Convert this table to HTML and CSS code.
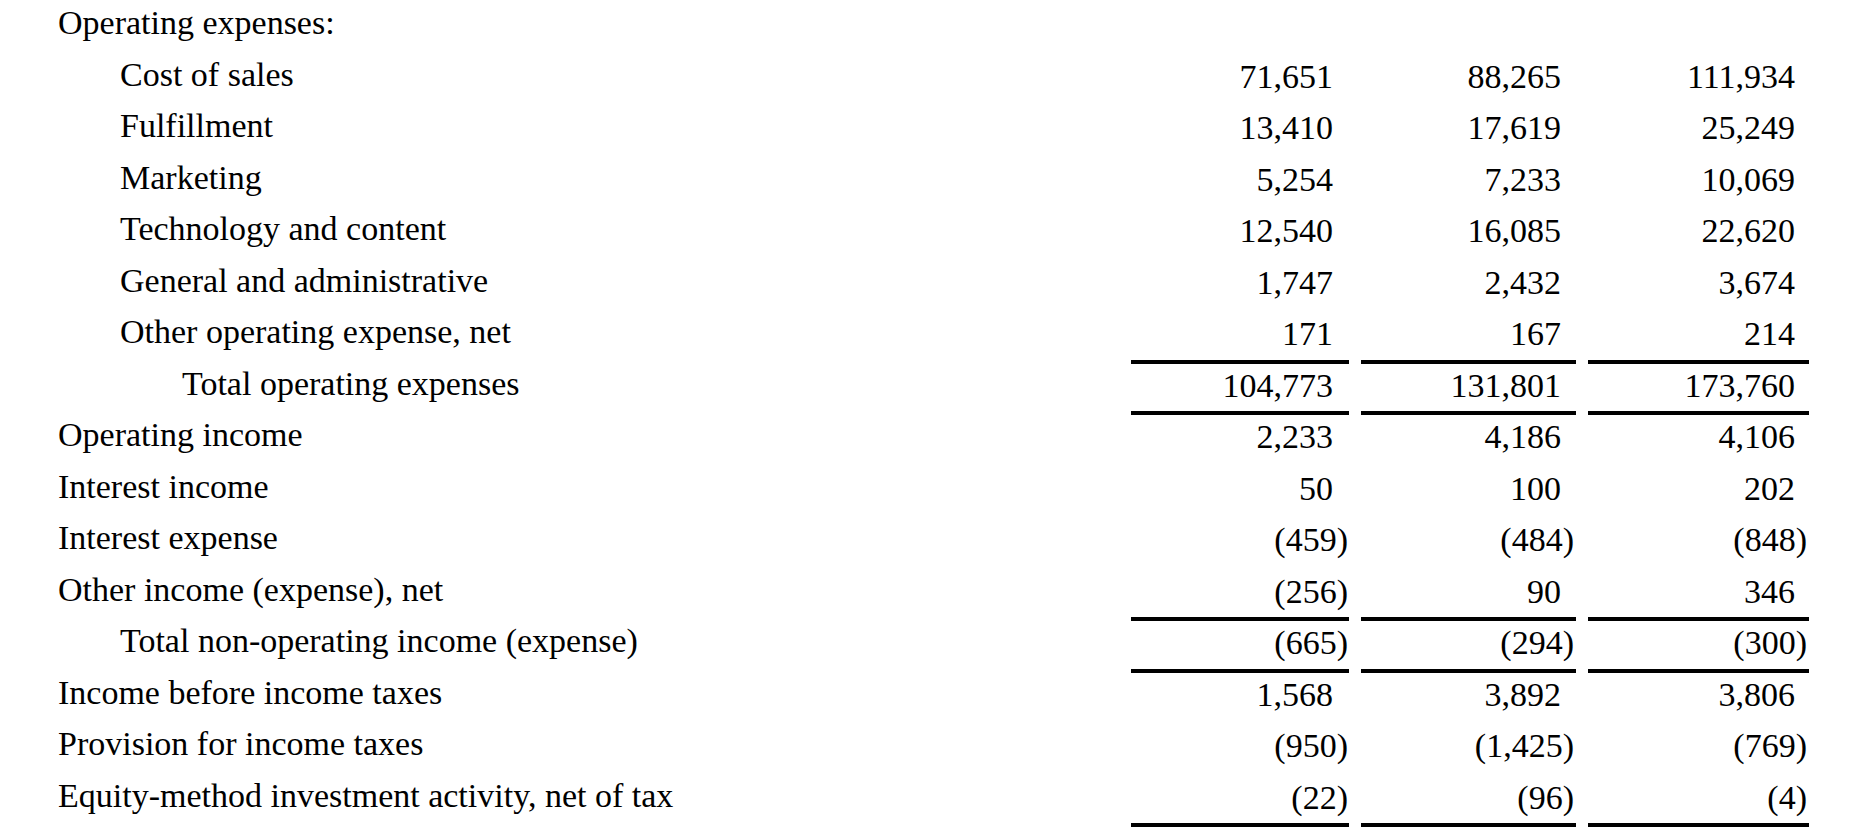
FILE: index.html
```html
<!DOCTYPE html>
<html lang="en">
<head>
<meta charset="utf-8">
<title>Operating expenses</title>
<link rel="stylesheet" href="styles.css">
</head>
<body>
<div class="stmt">
  <div class="lbl l0">Operating expenses:</div><div class="num c1"></div><div class="num c2"></div><div class="num c3"></div>

  <div class="lbl l1">Cost of sales</div><div class="num c1">71,651</div><div class="num c2">88,265</div><div class="num c3">111,934</div>
  <div class="lbl l1">Fulfillment</div><div class="num c1">13,410</div><div class="num c2">17,619</div><div class="num c3">25,249</div>
  <div class="lbl l1">Marketing</div><div class="num c1">5,254</div><div class="num c2">7,233</div><div class="num c3">10,069</div>
  <div class="lbl l1">Technology and content</div><div class="num c1">12,540</div><div class="num c2">16,085</div><div class="num c3">22,620</div>
  <div class="lbl l1">General and administrative</div><div class="num c1">1,747</div><div class="num c2">2,432</div><div class="num c3">3,674</div>
  <div class="lbl l1">Other operating expense, net</div><div class="num c1">171</div><div class="num c2">167</div><div class="num c3">214</div>

  <div class="lbl l2">Total operating expenses</div><div class="num c1 rt">104,773</div><div class="num c2 rt">131,801</div><div class="num c3 rt">173,760</div>

  <div class="lbl l0">Operating income</div><div class="num c1 rt">2,233</div><div class="num c2 rt">4,186</div><div class="num c3 rt">4,106</div>
  <div class="lbl l0">Interest income</div><div class="num c1">50</div><div class="num c2">100</div><div class="num c3">202</div>
  <div class="lbl l0">Interest expense</div><div class="num c1 neg">(459)</div><div class="num c2 neg">(484)</div><div class="num c3 neg">(848)</div>
  <div class="lbl l0">Other income (expense), net</div><div class="num c1 neg">(256)</div><div class="num c2">90</div><div class="num c3">346</div>

  <div class="lbl l1">Total non-operating income (expense)</div><div class="num c1 rt neg">(665)</div><div class="num c2 rt neg">(294)</div><div class="num c3 rt neg">(300)</div>

  <div class="lbl l0">Income before income taxes</div><div class="num c1 rt">1,568</div><div class="num c2 rt">3,892</div><div class="num c3 rt">3,806</div>
  <div class="lbl l0">Provision for income taxes</div><div class="num c1 neg">(950)</div><div class="num c2 neg">(1,425)</div><div class="num c3 neg">(769)</div>
  <div class="lbl l0">Equity-method investment activity, net of tax</div><div class="num c1 neg">(22)</div><div class="num c2 neg">(96)</div><div class="num c3 neg">(4)</div>

  <div class="end"></div><div class="end rt"></div><div class="end rt"></div><div class="end rt"></div>
</div>
</body>
</html>
```

FILE: styles.css
```css
html, body {
  margin: 0;
  padding: 0;
  background: #ffffff;
}

body {
  font-family: "Liberation Serif", "Times New Roman", serif;
  font-size: 34px;
  color: #000000;
  overflow: hidden;
}

.stmt {
  display: grid;
  grid-template-columns: 1119px 218px 215px 221px;
  grid-template-rows: repeat(16, 51.5px) 4px;
  column-gap: 12px;
  margin-top: -1px;
}

.lbl {
  line-height: 47.5px;
  white-space: nowrap;
}

.l0 { padding-left: 58px; }
.l1 { padding-left: 120px; }
.l2 { padding-left: 182px; }

.num {
  line-height: 51.5px;
  text-align: right;
  white-space: nowrap;
}

.c1 { padding-right: 16px; }
.c2 { padding-right: 15px; }
.c3 { padding-right: 14px; }

.c1.neg { padding-right: 1px; }
.c2.neg { padding-right: 2px; }
.c3.neg { padding-right: 2px; }

.rt {
  box-shadow: inset 0 4px 0 #000000;
}

.end {
  height: 4px;
}
```
